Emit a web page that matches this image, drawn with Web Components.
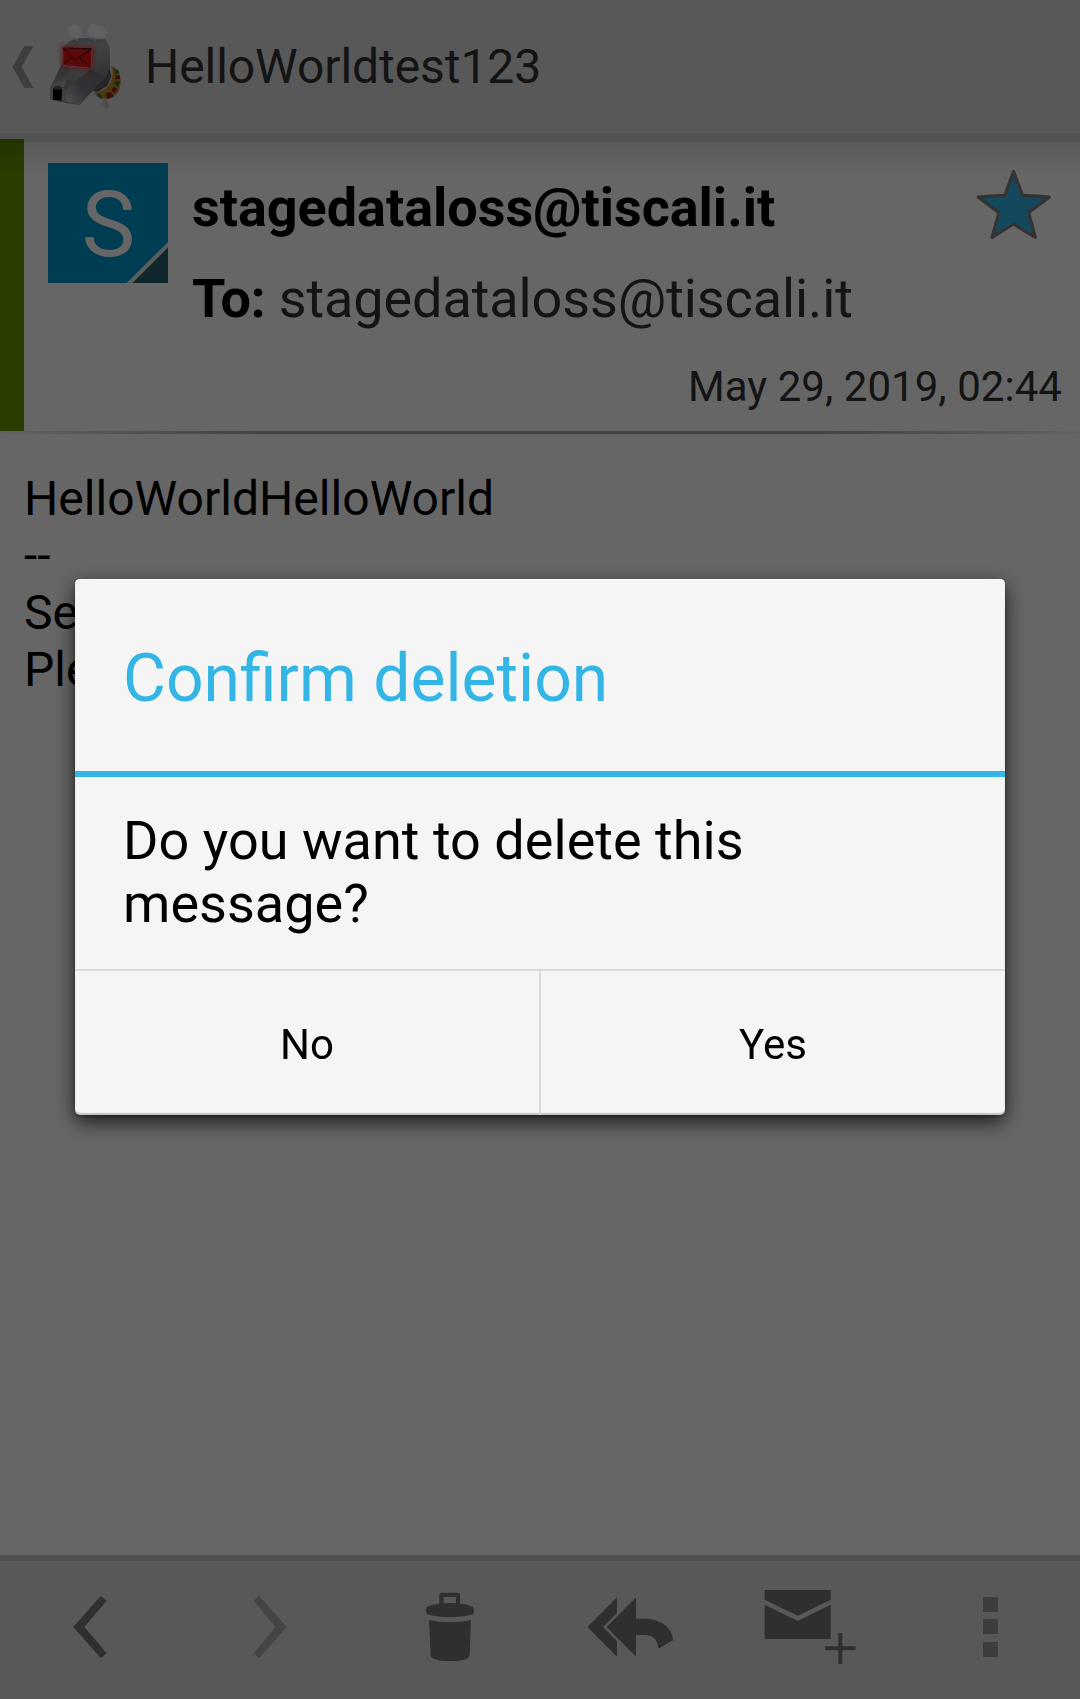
<!DOCTYPE html>
<html lang="en">
<head>
<meta charset="utf-8">
<title>HelloWorldtest123</title>
<style>
html,body{margin:0;height:100%;background:#fff;font-family:Roboto,"Noto Sans",sans-serif;overflow:hidden}
</style>
</head>
<body>
<mail-app></mail-app>
<script>
const define = (name, html) => {
  const t = document.createElement('template');
  t.innerHTML = html;
  customElements.define(name, class extends HTMLElement {
    constructor() {
      super();
      this.attachShadow({mode: 'open'}).append(t.content.cloneNode(true));
    }
  });
};

define('app-logo', `
<style>:host{display:block;width:84px;height:133px}svg{display:block}</style>
<svg width="84" height="133" viewBox="135 0 252 399">
  <defs>
    <linearGradient id="side" x1="0" y1="0" x2=".6" y2="1"><stop offset="0" stop-color="#b0b0b4"/><stop offset=".5" stop-color="#8c8c91"/><stop offset="1" stop-color="#606064"/></linearGradient>
    <linearGradient id="top" x1="0" y1="0" x2="0" y2="1"><stop offset="0" stop-color="#8a8a8e"/><stop offset="1" stop-color="#b4b4b8"/></linearGradient>
    <linearGradient id="cheek" gradientUnits="userSpaceOnUse" x1="275" y1="140" x2="310" y2="240"><stop offset="0" stop-color="#a6a6ab"/><stop offset=".5" stop-color="#94949a"/><stop offset="1" stop-color="#6e6e74"/></linearGradient>
    <linearGradient id="snout" x1="0" y1="0" x2=".3" y2="1"><stop offset="0" stop-color="#7c7c81"/><stop offset=".6" stop-color="#88888d"/><stop offset="1" stop-color="#b4b4b8"/></linearGradient>
    <linearGradient id="bridge" x1="1" y1="0" x2="0" y2="1"><stop offset="0" stop-color="#a2a2a7"/><stop offset="1" stop-color="#7c7c81"/></linearGradient>
    <linearGradient id="jaw" gradientUnits="userSpaceOnUse" x1="205" y1="300" x2="290" y2="235"><stop offset="0" stop-color="#b8b8bc"/><stop offset=".5" stop-color="#7e7e83"/><stop offset="1" stop-color="#74747a"/></linearGradient>
    <filter id="glow" x="-30%" y="-40%" width="160%" height="180%"><feGaussianBlur stdDeviation="7"/></filter>
  </defs>
  <path d="M312 298L306 312L318 328L327 322L324 306Z" fill="#b8bcbc"/>
  <path d="M334 198C366 206 372 262 346 286C328 304 300 300 280 280L292 270C322 276 346 240 334 198Z" fill="#c48a24"/>
  <path d="M343 209l12 0 3 11-12 1zM346 242l14 2-5 16-13-6zM288 278l12 3 8 15-10-2z" fill="#2a7040"/>
  <path d="M347 225l13 2-1 11-12-1zM340 260l12 7-9 13-9-11zM316 280l15-4 10 12-19 10z" fill="#8c1c20"/>
  <path d="M331 199C344 230 330 270 282 281" fill="none" stroke="#c4c0b0" stroke-width="3"/>
  <path d="M328 202L334 228L322 258L292 275L276 272L300 240Z" fill="#55555a"/>
  <path d="M330 222Q322 254 284 268M326 212Q316 242 282 260" fill="none" stroke="#8a8a90" stroke-width="2"/>
  <path d="M190 142L212 122L246 114L316 118L328 142L330 200L318 230L238 314L200 309L150 298L151 264L184 196Z" fill="url(#side)"/>
  <path d="M190 142L212 122L246 114L316 121L277 144Z" fill="url(#top)"/>
  <path d="M277 144L316 121L328 142L330 200L318 232L272 206Z" fill="url(#cheek)"/>
  <path d="M184 196L272 206L198 270L186 258L160 256L151 264Z" fill="url(#bridge)"/>
  <path d="M184 196L212 206L192 258L184 264L172 256L152 264Z" fill="url(#snout)"/>
  <path d="M272 206L318 232L238 314L196 305L198 270Z" fill="url(#jaw)"/>
  <path d="M150 266Q156 254 172 254Q188 256 198 272L196 306L150 297Z" fill="#a2a2a7"/>
  <path d="M159 264Q172 250 187 264L186 272H159Z" fill="#54545a"/>
  <path d="M159 268L187 270L184 303L159 299Z" fill="#000"/>
  <path d="M187 141L278 144L274 206L188 196Z" fill="#f01818" stroke="#f01818" stroke-width="10" opacity=".6" filter="url(#glow)"/>
  <path d="M188 143L276 145L273 205L189 196Z" fill="#e01418" stroke="#d88a8a" stroke-width="3"/>
  <path d="M190 145L226 180L274 147M190 193L216 171M272 202L239 173" fill="none" stroke="#350608" stroke-width="3"/>
  <path d="M190 144L275 146" stroke="#4a0808" stroke-width="3"/>
  <g fill="#f0f0f0" stroke="#e8e8e8" stroke-width="2">
    <path d="M205 88C208 74 224 70 236 77C249 82 250 104 238 110C224 116 202 114 205 88Z"/>
    <path d="M263 92C261 76 278 70 294 77C314 78 324 90 321 103C315 116 298 117 285 110C272 110 264 106 263 92Z"/>
  </g>
  <path d="M222 82L232 122M296 80L284 122" stroke="#fcfcfc" stroke-width="3" fill="none" stroke-linecap="round"/>
  <path d="M188 142L212 122L246 115L316 119" fill="none" stroke="#aaa" stroke-width="2"/>
</svg>`);

define('action-bar', `
<style>
:host{display:flex;align-items:center;height:133px;background:#dcdcdc;border-bottom:6px solid #cfcfcf;color:#333}
.up{display:block;width:45px;height:133px}
.title{font-size:48px;line-height:57px;margin-left:16px;white-space:nowrap;letter-spacing:-.06px}
</style>
<svg class="up" viewBox="0 0 135 399"><path d="M73 138H100L65 201L100 264H73L38 201Z" fill="#989898"/></svg>
<app-logo></app-logo>
<span class="title"><slot></slot></span>`);

define('contact-badge', `
<style>
:host{display:grid;width:120px;height:120px;background:#0099cc;color:#fff;flex:none}
span,svg{grid-area:1/1}
span{font-size:90px;line-height:126px;height:120px;padding-left:1px;text-align:center}
</style>
<span><slot></slot></span>
<svg width="120" height="120"><path d="M120 79V120H78.5Z" fill="#e2e8ea"/><path d="M120 84.5V120H84.5Z" fill="#235f6e"/></svg>`);

define('star-toggle', `
<style>:host{display:block;width:80px;height:76px}svg{display:block}</style>
<svg width="80" height="76" viewBox="974 168 80 76"><path d="M1013.5 172.6L1022.6 196.6Q1036 196.3 1049.2 198.2L1028.6 213.6L1035.3 238.4L1013.5 225L992 238.4L999 213.6L978.2 198.2Q991 196.3 1004.8 196.6Z" fill="#33b5e5" stroke="#808080" stroke-width="3.2" stroke-linejoin="round"/></svg>`);

define('message-header', `
<style>
:host{display:flex;height:292px;align-items:stretch;background:linear-gradient(rgba(0,0,0,.19) 0,rgba(0,0,0,.17) 3px,rgba(0,0,0,.115) 3px,rgba(0,0,0,.08) 15px,transparent 34px),linear-gradient(to right,#669900 24px,#fff 24px)}
contact-badge{margin:24px 24px 0 48px}
.info{flex:1;display:flex;flex-direction:column;padding-top:37px;font-size:54px;line-height:63px;color:#333;white-space:nowrap}
.row{display:flex;justify-content:space-between;height:91px}
b{color:#000;letter-spacing:-.04px}
.to{letter-spacing:-.1px}
.to b{letter-spacing:-.4px}
star-toggle{margin:-9px 26px 0 0}
.date{font-size:42px;line-height:49px;margin:4px 18px 0 0;text-align:right;letter-spacing:.05px}
</style>
<contact-badge>S</contact-badge>
<div class="info">
  <div class="row"><b><slot name="from"></slot></b><star-toggle></star-toggle></div>
  <div class="row"><span class="to"><b>To:</b> <slot name="to"></slot></span></div>
  <div class="date"><slot name="date"></slot></div>
</div>`);

define('message-body', `
<style>
:host{display:block;flex:1;font-size:48px;line-height:57px;color:#000}
.rule{height:3px;background:linear-gradient(to right,#f4f4f4,#aaa 24%,#aaa 76%,#f4f4f4)}
.text{padding:36px 24px 0;letter-spacing:.04px}
</style>
<div class="rule"></div><div class="text"><slot></slot></div>`);

define('tool-bar', `
<style>
:host{display:grid;grid-template-columns:repeat(6,180px);height:138px;background:#dcdcdc;border-top:6px solid #c8c8c8}
svg{display:block;width:180px;height:138px;fill:#757575}
</style>
<svg viewBox="0 63 540 414"><path d="M302 168L320 182L253 261L320 340L302 354L220 261Z"/></svg>
<svg viewBox="540 63 540 414"><path fill="#aaa" d="M778 168L761 182L826 261L761 340L778 354L860 261Z"/></svg>
<svg viewBox="0 63 540 414"><path fill-rule="evenodd" d="M238 191V164Q238 158 244 158H294Q300 158 300 164V191Q323 193 338 200Q342 203 342 211Q342 221 338 223Q310 232 270 232Q230 232 202 223Q198 221 198 211Q198 203 202 200Q217 193 238 191ZM251 190Q270 188 288 190V171H251Z"/><path d="M207 240Q236 247 270 247Q304 247 333 240L329 345Q327 363 270 363Q214 363 212 345Z"/></svg>
<svg viewBox="540 63 540 414"><path d="M771 172V219L729 261L771 303V350L682 261Z"/><path d="M828 172V236H855C900 236 938 262 939 301L895 326C893 298 878 285 855 285H828V350L740 261Z"/></svg>
<svg viewBox="0 63 540 414"><path d="M134 150H332V179L233 227L134 179Z"/><path d="M134 194L233 243L332 194V297H134Z"/><path d="M355 279H367V319H407V331H367V372H355V331H315V319H355Z"/></svg>
<svg viewBox="540 63 540 414"><path fill="#999" d="M789 171h45v45h-45zM789 237h45v45h-45zM789 306h45v45h-45z"/></svg>`);

define('confirm-dialog', `
<style>
:host{position:fixed;inset:0;display:flex;align-items:center;justify-content:center;padding-bottom:5px;background:rgba(0,0,0,.6);color:#000}
.card{width:930px;height:536px;box-sizing:border-box;display:flex;flex-direction:column;background:#f5f5f5;border-radius:5px;box-shadow:0 7px 20px rgba(0,0,0,.75),0 1px 3px rgba(0,0,0,.3),inset 0 -2px 1px rgba(0,0,0,.2),inset 0 1px #fff}
.title{box-sizing:border-box;height:198px;padding:63px 48px 0;border-bottom:6px solid #33b5e5;font-size:66px;line-height:74px;color:#33b5e5}
.msg{box-sizing:border-box;height:192px;padding:32px 48px 0;font-size:54px;line-height:63px;letter-spacing:.03px}
.actions{flex:1;display:grid;grid-template-columns:464px 464px;column-gap:2px;border-top:2px solid #dadada;background:linear-gradient(#dadada,#dadada) 464px 0/2px 100% no-repeat}
.actions div{display:flex;align-items:center;justify-content:center;padding-top:2px;font-size:42px;line-height:49px}
</style>
<div class="card">
  <div class="title"><slot name="title"></slot></div>
  <div class="msg"><slot></slot></div>
  <div class="actions"><div><slot name="no"></slot></div><div><slot name="yes"></slot></div></div>
</div>`);

define('mail-app', `
<style>:host{display:flex;flex-direction:column;width:1080px;height:1699px;background:#fff}</style>
<action-bar>HelloWorldtest123</action-bar>
<message-header>
  <span slot="from">stagedataloss@tiscali.it</span>
  <span slot="to">stagedataloss@tiscali.it</span>
  <span slot="date">May 29, 2019, 02:44</span>
</message-header>
<message-body>HelloWorldHelloWorld<br>--<br>Se<br>Ple</message-body>
<tool-bar></tool-bar>
<confirm-dialog>
  <span slot="title">Confirm deletion</span>
  Do you want to delete this message?
  <span slot="no">No</span>
  <span slot="yes">Yes</span>
</confirm-dialog>`);
</script>
</body>
</html>
